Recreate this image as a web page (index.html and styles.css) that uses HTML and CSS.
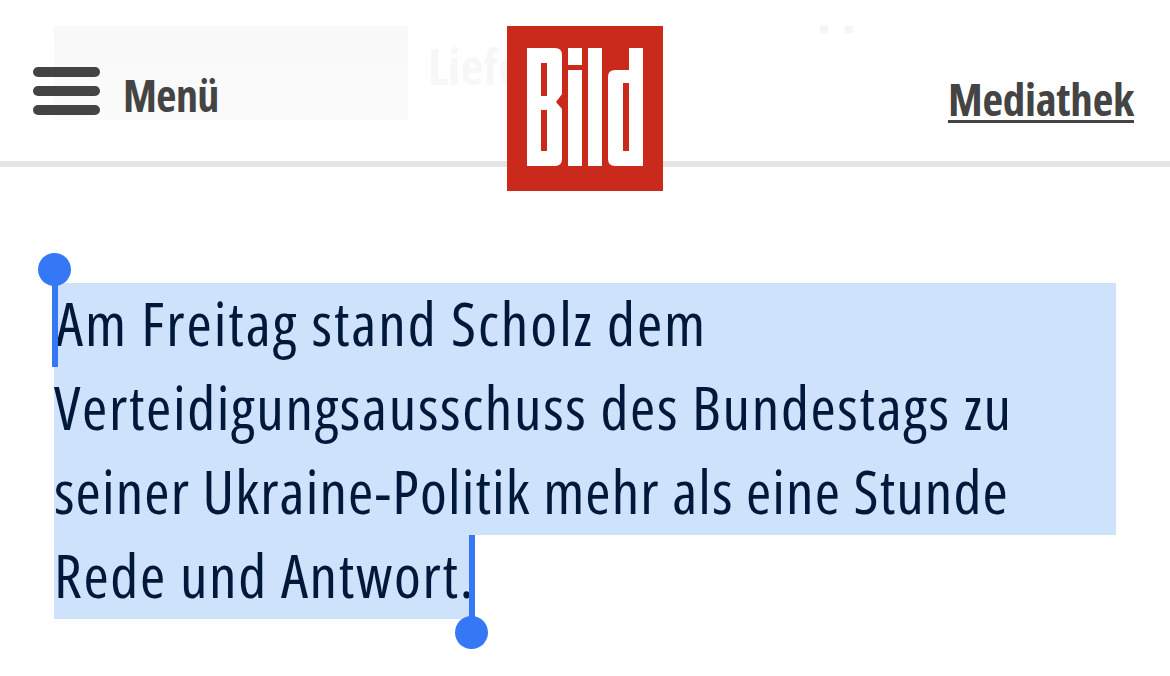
FILE: index.html
```html
<!DOCTYPE html>
<html lang="de">
<head>
<meta charset="utf-8">
<title>BILD</title>
<link rel="stylesheet" href="styles.css">
</head>
<body>
<header class="header">
  <div class="ghost-image"></div>
  <div class="ghost-text">Liefe</div>
  <div class="ghost-dots"><i></i><i></i></div>
  <div class="menu">
    <div class="burger"><span></span><span></span><span></span></div>
    <span class="menu-label">Menü</span>
  </div>
  <a class="media-link" href="#">Mediathek</a>
  <svg class="logo" viewBox="0 0 156 165" role="img" aria-label="BILD">
    <rect width="156" height="165" fill="#c92a1c"/>
    <path fill="#fff" fill-rule="evenodd" d="M20 22H48Q55 22 55 29V68L49 76L55 83V133Q55 140 48 140H20ZM34 37V70H40V37ZM34 84V125H40V84Z"/>
    <path fill="#fff" d="M61 22H75V39H61ZM61 44H75V140H61ZM81 22H95V140H81Z"/>
    <path fill="#fff" fill-rule="evenodd" d="M122 22H136V140H108Q101 140 101 133V51Q101 44 108 44H122ZM116 57V125H122V57Z"/>
  </svg>
</header>
<main class="content">
  <div class="selection">
    <div class="line line-1">Am Freitag stand Scholz dem</div>
    <div class="line line-2">Verteidigungsausschuss des Bundestags zu</div>
    <div class="line line-3">seiner Ukraine-Politik mehr als eine Stunde</div>
    <div class="line line-4">Rede und Antwort.</div>
    <div class="handle handle-start"></div>
    <div class="handle handle-end"></div>
  </div>
</main>
</body>
</html>
```
FILE: styles.css
```css
* { box-sizing: border-box; }
html, body { margin: 0; height: 100%; background: #fff; overflow: hidden; }
body { font-family: "Open Sans", "Liberation Sans", sans-serif; font-stretch: 75%; }

.header {
  position: relative;
  height: 167px;
  border-bottom: 6px solid #e4e4e4;
  display: flex;
  justify-content: space-between;
  align-items: flex-start;
  padding: 0 36px 0 33px;
}
.ghost-image {
  position: absolute;
  left: 54px;
  top: 26px;
  width: 354px;
  height: 94px;
  background: linear-gradient(#f8f8f8, #fbfbfb);
}
.ghost-text {
  position: absolute;
  left: 428px;
  top: 36px;
  font-weight: 700;
  font-size: 50px;
  line-height: 60px;
  color: #f7f7f7;
}
.ghost-dots {
  position: absolute;
  left: 820px;
  top: 26px;
  display: flex;
  gap: 17px;
}
.ghost-dots i { width: 8px; height: 7px; background: #f5f5f5; }

.menu {
  position: relative;
  display: flex;
  align-items: flex-start;
  gap: 23px;
  padding-top: 67px;
}
.burger { display: flex; flex-direction: column; gap: 9px; width: 67px; }
.burger span { height: 10px; border-radius: 5px; background: #444; }
.menu-label {
  font-weight: 700;
  font-size: 44px;
  letter-spacing: -0.6px;
  line-height: 50px;
  color: #444;
  margin-top: 3px;
}
.media-link {
  position: relative;
  margin-top: 72px;
  font-weight: 700;
  font-size: 45px;
  letter-spacing: -0.25px;
  line-height: 54px;
  color: #444;
  text-decoration: underline;
  text-decoration-thickness: 3px;
  text-underline-offset: 4px;
}
.logo {
  position: absolute;
  left: 507px;
  top: 26px;
  width: 156px;
  height: 165px;
}

.content { padding: 116px 54px 0; }
.selection { position: relative; width: 1062px; }
.line {
  height: 84px;
  background: #cfe2fb;
  color: #00183a;
  font-size: 61px;
  line-height: 80px;
  white-space: nowrap;
}
.line-1 { letter-spacing: 1.96px; padding-left: 2px; }
.line-2 { letter-spacing: 1.67px; }
.line-3 { letter-spacing: 1.12px; }
.line-4 { letter-spacing: 1.7px; width: 417px; }

.handle { position: absolute; width: 6px; height: 84px; background: #3478f6; }
.handle::after {
  content: "";
  position: absolute;
  left: -14px;
  width: 33px;
  height: 33px;
  border-radius: 50%;
  background: #3478f6;
}
.handle-start { left: -2px; top: 0; }
.handle-start::after { top: -30px; }
.handle-end { left: 415px; top: 252px; }
.handle-end::after { top: 81px; }
```
